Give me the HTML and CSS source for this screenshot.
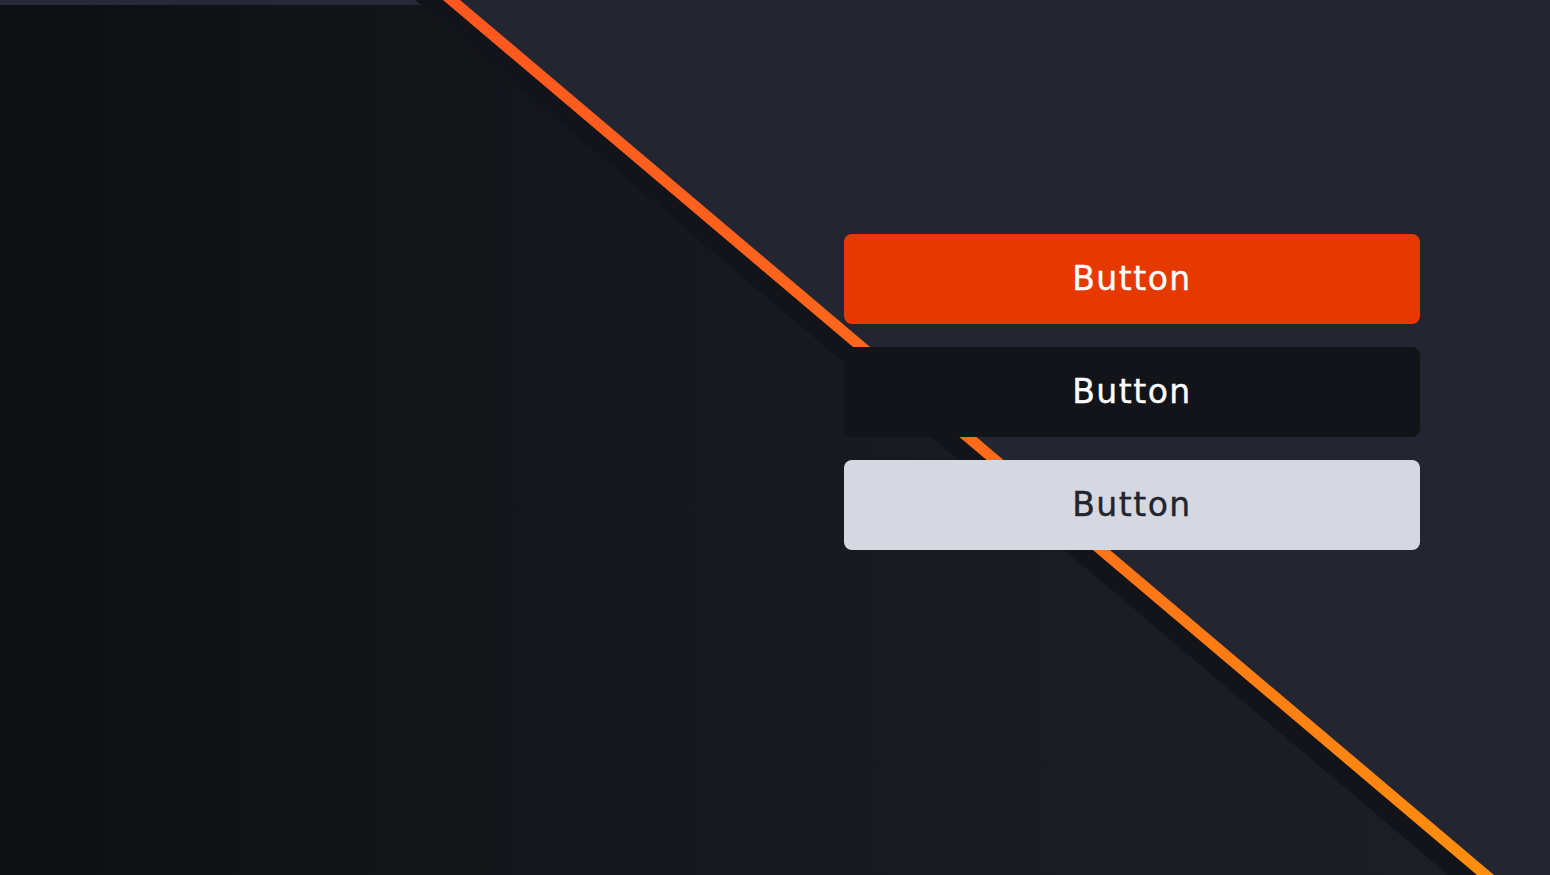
FILE: index.html
```html
<!DOCTYPE html>
<html lang="en">
<head>
<meta charset="utf-8">
<title>Buttons</title>
<link rel="stylesheet" href="styles.css">
</head>
<body>
<div class="stage">
  <svg class="backdrop" viewBox="0 0 1550 875" preserveAspectRatio="none" aria-hidden="true">
    <defs>
      <linearGradient id="panel" x1="0" y1="0" x2="1" y2="0">
        <stop offset="0" stop-color="#0e0f13"/>
        <stop offset="0.35" stop-color="#15161b"/>
        <stop offset="0.55" stop-color="#18191f"/>
        <stop offset="0.75" stop-color="#1a1c24"/>
        <stop offset="1" stop-color="#1c1e26"/>
      </linearGradient>
      <linearGradient id="stripe" x1="0" y1="0" x2="0" y2="1">
        <stop offset="0" stop-color="#ff571f"/>
        <stop offset="0.5" stop-color="#ff6a1a"/>
        <stop offset="1" stop-color="#ff8e0e"/>
      </linearGradient>
    </defs>
    <rect x="0" y="0" width="1550" height="875" fill="#232530"/>
    <rect x="0" y="0" width="430" height="5" fill="#272937"/>
    <polygon points="0,5 421,5 1448,875 0,875" fill="url(#panel)"/>
    <polygon points="415,0 443,0 1477,875 1448,875 421,5" fill="#131419"/>
    <polygon points="443,0 460,0 1494,875 1477,875" fill="url(#stripe)"/>
  </svg>

  <div class="buttons">
    <button class="btn btn-primary" type="button">Button</button>
    <button class="btn btn-dark" type="button">Button</button>
    <button class="btn btn-light" type="button">Button</button>
  </div>
</div>
</body>
</html>
```

FILE: styles.css
```css
html, body {
  margin: 0;
  padding: 0;
  background: #232530;
}

.stage {
  position: relative;
  width: 1550px;
  height: 875px;
  overflow: hidden;
}

.backdrop {
  position: absolute;
  inset: 0;
  width: 100%;
  height: 100%;
  display: block;
}

.buttons {
  position: relative;
  display: flex;
  flex-direction: column;
  gap: 23px;
  width: 576px;
  padding: 234px 0 0 844px;
}

.btn {
  height: 90px;
  border: none;
  border-radius: 8px;
  font-family: "DejaVu Sans", "Liberation Sans", sans-serif;
  font-size: 33px;
  font-weight: 400;
  letter-spacing: 1.5px;
  -webkit-text-stroke: 0.4px currentColor;
  display: flex;
  align-items: center;
  justify-content: center;
  padding: 0 0 1px 0;
  cursor: pointer;
}

.btn-primary {
  background: #e63900;
  color: #ffffff;
}

.btn-dark {
  background: #13141a;
  color: #ffffff;
}

.btn-light {
  background: #d5d8e1;
  color: #22242e;
}
```
